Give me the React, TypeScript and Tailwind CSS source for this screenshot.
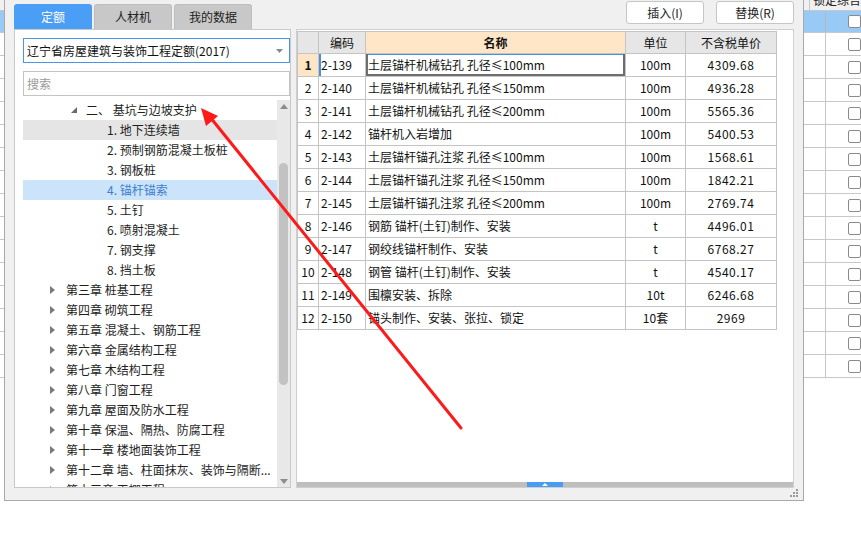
import React from "react";

const tree: { lvl: number; text: string; hl?: "gray" | "blue" }[] = [
  { lvl: 1, text: "二、 基坑与边坡支护" },
  { lvl: 2, text: "1. 地下连续墙", hl: "gray" },
  { lvl: 2, text: "2. 预制钢筋混凝土板桩" },
  { lvl: 2, text: "3. 钢板桩" },
  { lvl: 2, text: "4. 锚杆锚索", hl: "blue" },
  { lvl: 2, text: "5. 土钉" },
  { lvl: 2, text: "6. 喷射混凝土" },
  { lvl: 2, text: "7. 钢支撑" },
  { lvl: 2, text: "8. 挡土板" },
  { lvl: 0, text: "第三章 桩基工程" },
  { lvl: 0, text: "第四章 砌筑工程" },
  { lvl: 0, text: "第五章 混凝土、钢筋工程" },
  { lvl: 0, text: "第六章 金属结构工程" },
  { lvl: 0, text: "第七章 木结构工程" },
  { lvl: 0, text: "第八章 门窗工程" },
  { lvl: 0, text: "第九章 屋面及防水工程" },
  { lvl: 0, text: "第十章 保温、隔热、防腐工程" },
  { lvl: 0, text: "第十一章 楼地面装饰工程" },
  { lvl: 0, text: "第十二章 墙、柱面抹灰、装饰与隔断..." },
  { lvl: 0, text: "第十三章 天棚工程" },
];

const rows = [
  ["2-139", "土层锚杆机械钻孔 孔径≤100mm", "100m", "4309.68"],
  ["2-140", "土层锚杆机械钻孔 孔径≤150mm", "100m", "4936.28"],
  ["2-141", "土层锚杆机械钻孔 孔径≤200mm", "100m", "5565.36"],
  ["2-142", "锚杆机入岩增加", "100m", "5400.53"],
  ["2-143", "土层锚杆锚孔注浆 孔径≤100mm", "100m", "1568.61"],
  ["2-144", "土层锚杆锚孔注浆 孔径≤150mm", "100m", "1842.21"],
  ["2-145", "土层锚杆锚孔注浆 孔径≤200mm", "100m", "2769.74"],
  ["2-146", "钢筋 锚杆(土钉)制作、安装", "t", "4496.01"],
  ["2-147", "钢绞线锚杆制作、安装", "t", "6768.27"],
  ["2-148", "钢管 锚杆(土钉)制作、安装", "t", "4540.17"],
  ["2-149", "围檩安装、拆除", "10t", "6246.68"],
  ["2-150", "锚头制作、安装、张拉、锁定", "10套", "2969"],
];

function Background() {
  return (
    <div className="flex flex-col">
      <div className="h-[11px] bg-[#f0f0f0] border-b border-[#c8c8c8] flex overflow-hidden">
        <div className="w-[780px]" />
        <div className="w-[50px] border-r border-[#c8c8c8] text-center text-[12px] leading-[12px] -mt-[6px] text-[#222]">暂估</div>
        <div className="pl-[3px] text-[12px] leading-[12px] -mt-[6px] text-[#222] whitespace-nowrap">锁定综合</div>
      </div>
      <div className="h-[22px] bg-[#99c9f5] border-b border-[#c8c8c8] flex">
        <div className="w-[780px]" />
        <div className="w-[50px] border-r border-[#b8b8b8]" />
        <div className="flex items-center pl-[22px]">
          <div className="w-[13px] h-[13px] rounded-[2px] border border-[#8a8a8a] bg-white" />
        </div>
      </div>
      {Array.from({ length: 15 }).map((_, i) => (
        <div key={i} className="h-[23px] border-b border-[#c8c8c8] flex">
          <div className="w-[780px]" />
          <div className="w-[50px] border-r border-[#c8c8c8] flex items-center pl-[15px]">
            {i < 11 && <div className="w-[13px] h-[13px] rounded-[2px] border border-[#8a8a8a] bg-white" />}
          </div>
          <div className="flex items-center pl-[22px]">
            <div className="w-[13px] h-[13px] rounded-[2px] border border-[#8a8a8a] bg-white" />
          </div>
        </div>
      ))}
    </div>
  );
}

function TreeRow({ row }: { row: (typeof tree)[number] }) {
  const bg = row.hl === "gray" ? "bg-[#e5e5e5]" : row.hl === "blue" ? "bg-[#cce4fa]" : "";
  const color = row.hl === "blue" ? "text-[#3d7fd0]" : "text-[#1e1e1e]";
  return (
    <div className={`h-[20px] flex items-center whitespace-nowrap text-[12px] ${bg} ${color}`}>
      {row.lvl === 0 && (
        <>
          <svg width="5" height="8" viewBox="0 0 5 8" className="ml-[27px] mr-[11px]">
            <polygon points="0,0 5,4 0,8" fill="#7a7a7a" />
          </svg>
          <span>{row.text}</span>
        </>
      )}
      {row.lvl === 1 && (
        <>
          <svg width="6" height="6" viewBox="0 0 6 6" className="ml-[48px] mr-[9px]">
            <polygon points="6,0 6,6 0,6" fill="#6a6a6a" />
          </svg>
          <span>{row.text}</span>
        </>
      )}
      {row.lvl === 2 && <span className="ml-[84px]">{row.text}</span>}
    </div>
  );
}

function LeftPanel() {
  return (
    <div className="w-[277px] h-[459px] bg-white border border-[#c9c9c9] flex flex-col">
      <div className="pl-[8px] pt-[8px] flex flex-col">
        <div className="h-[25px] border border-[#4a95e6] flex items-center justify-between pl-[3px] pr-[6px]">
          <span className="text-[12px] text-[#111] whitespace-nowrap">辽宁省房屋建筑与装饰工程定额(2017)</span>
          <svg width="7" height="4" viewBox="0 0 7 4">
            <polygon points="0,0 7,0 3.5,4" fill="#8a8a8a" />
          </svg>
        </div>
        <div className="h-[25px] mt-[8px] border border-[#c4c4c4] flex items-center pl-[3px]">
          <span className="text-[12px] text-[#9a9a9a]">搜索</span>
        </div>
      </div>
      <div className="mt-[4px] flex-1 flex min-h-0">
        <div className="flex-1 pl-[8px] overflow-hidden">
          {tree.map((r, i) => (
            <TreeRow key={i} row={r} />
          ))}
        </div>
        <div className="w-[13px] bg-[#e8e8e8] flex flex-col items-center">
          <svg width="8" height="5" viewBox="0 0 8 5" className="mt-[4px]">
            <polygon points="4,0 8,5 0,5" fill="#8c8c8c" />
          </svg>
          <div className="mt-[54px] w-[9px] h-[222px] rounded-full bg-[#c2c2c2]" />
          <div className="flex-1" />
          <svg width="8" height="5" viewBox="0 0 8 5" className="mb-[3px]">
            <polygon points="0,0 8,0 4,5" fill="#8c8c8c" />
          </svg>
        </div>
      </div>
    </div>
  );
}

function RightPanel() {
  const line = "border-r border-b border-[#c4c4c4]";
  return (
    <div className="w-[498px] h-[459px] bg-white border border-[#cfcfcf] flex flex-col">
      <div className="flex-1 pt-[1px]">
        <div className="w-[480px] border-l border-t border-[#c4c4c4] text-[12px] text-[#111]">
          <div className="flex h-[22px]">
            <div className={`w-[21px] bg-[#e6e6e6] ${line}`} />
            <div className={`w-[47px] bg-[#e6e6e6] flex items-center justify-center ${line}`}>编码</div>
            <div className={`w-[260px] bg-[#ffe6c7] flex items-center justify-center font-bold ${line}`}>名称</div>
            <div className={`w-[60px] bg-[#e6e6e6] flex items-center justify-center ${line}`}>单位</div>
            <div className={`w-[91px] bg-[#e6e6e6] flex items-center justify-center ${line}`}>不含税单价</div>
          </div>
          {rows.map((r, i) => (
            <div key={i} className="flex h-[23px]">
              <div
                className={`w-[21px] flex items-center justify-center ${line} ${
                  i === 0 ? "bg-[#fde5c6] font-bold" : ""
                }`}
              >
                {i + 1}
              </div>
              <div
                className={`w-[47px] flex items-center pl-[2px] ${line} ${
                  i === 0 ? "shadow-[inset_2px_0_0_#4a90e2]" : ""
                }`}
              >
                {r[0]}
              </div>
              <div
                className={`w-[260px] flex items-center pl-[2px] whitespace-nowrap ${line} ${
                  i === 0
                    ? "shadow-[inset_2px_0_0_#6e6e6e,inset_-2px_0_0_#6e6e6e,inset_0_-2px_0_#6e6e6e,inset_0_1px_0_#4a90e2]"
                    : ""
                }`}
              >
                {r[1]}
              </div>
              <div className={`w-[60px] flex items-center justify-center ${line}`}>{r[2]}</div>
              <div className={`w-[91px] flex items-center justify-center tracking-[0.5px] ${line}`}>{r[3]}</div>
            </div>
          ))}
        </div>
      </div>
      <div className="h-[5px] bg-[#bebebe] flex">
        <div className="ml-[230px] w-[36px] h-[5px] bg-[#4a9cf3] flex items-center justify-center">
          <svg width="6" height="3" viewBox="0 0 6 3">
            <polygon points="3,0 6,3 0,3" fill="#ffffff" />
          </svg>
        </div>
      </div>
    </div>
  );
}

function Dialog() {
  return (
    <div className="absolute left-[4px] top-0 w-[800px] h-[501px] bg-[#f0f0f0] border-l border-r border-b border-[#a9a9a9] px-[9px] flex flex-col">
      <div className="h-[29px] flex justify-between">
        <div className="flex items-end gap-[2px]">
          {["定额", "人材机", "我的数据"].map((t, i) => (
            <div
              key={t}
              className={`w-[78px] h-[25px] rounded-t-[3px] flex items-center justify-center text-[12px] ${
                i === 0 ? "bg-[#4a9ef5] text-white" : "bg-[#c8c8c8] text-[#222] border border-b-0 border-[#bdbdbd]"
              }`}
            >
              {t}
            </div>
          ))}
        </div>
        <div className="flex items-start gap-[12px] pt-[1px]">
          <div className="w-[78px] h-[23px] rounded-[3px] border border-[#c6c6c6] bg-white flex items-center justify-center text-[12px] text-[#222]">
            插入(I)
          </div>
          <div className="w-[78px] h-[23px] rounded-[3px] border border-[#c6c6c6] bg-white flex items-center justify-center text-[12px] text-[#222]">
            替换(R)
          </div>
        </div>
      </div>
      <div className="flex gap-[5px]">
        <LeftPanel />
        <RightPanel />
      </div>
      <div className="flex-1 flex justify-end items-end pb-[3px] -mr-[4px]">
        <svg width="8" height="8" viewBox="0 0 8 8">
          <rect x="6" y="0" width="2" height="2" fill="#9a9a9a" />
          <rect x="3" y="3" width="2" height="2" fill="#9a9a9a" />
          <rect x="6" y="3" width="2" height="2" fill="#9a9a9a" />
          <rect x="0" y="6" width="2" height="2" fill="#9a9a9a" />
          <rect x="3" y="6" width="2" height="2" fill="#9a9a9a" />
          <rect x="6" y="6" width="2" height="2" fill="#9a9a9a" />
        </svg>
      </div>
    </div>
  );
}

export default function App() {
  return (
    <div className="relative w-[861px] h-[537px] bg-white overflow-hidden font-['Noto_Sans_CJK_SC','Microsoft_YaHei',sans-serif]">
      <Background />
      <Dialog />
      <svg className="absolute left-0 top-0 pointer-events-none" width="861" height="537">
        <line x1="461" y1="428" x2="210" y2="117" stroke="#ff1a1a" strokeWidth="3" strokeLinecap="round" />
        <polygon points="201,108 218,116 206,126" fill="#ff1a1a" />
      </svg>
    </div>
  );
}
